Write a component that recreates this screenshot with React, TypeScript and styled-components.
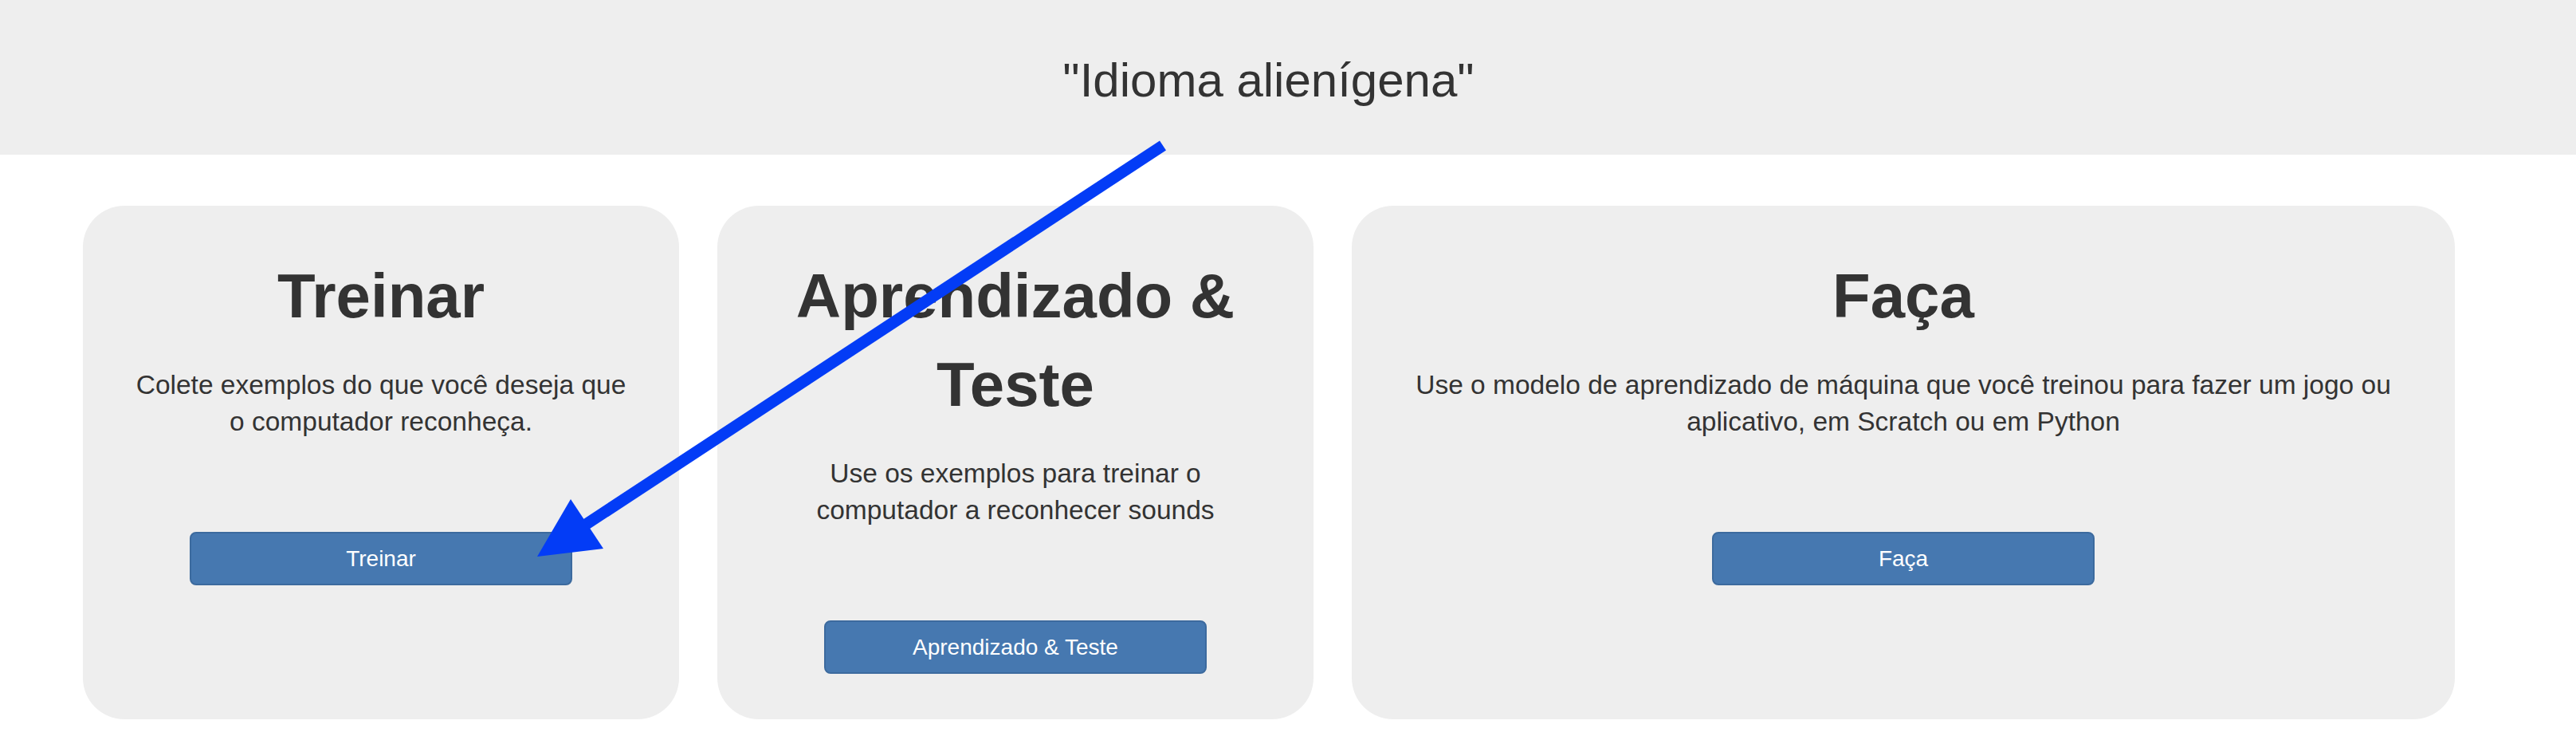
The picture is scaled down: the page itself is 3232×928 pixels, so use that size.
import React from 'react';
import styled, { createGlobalStyle } from 'styled-components';

const GlobalStyle = createGlobalStyle`
    html, body {
        margin: 0;
        padding: 0;
        background: #ffffff;
    }
    body {
        font-family: "Liberation Sans", Arial, sans-serif;
        color: #333333;
    }
`;

const Page = styled.div`
    position: relative;
    width: 3232px;
    height: 928px;
    overflow: hidden;
`;

const Header = styled.header`
    box-sizing: border-box;
    height: 194px;
    padding: 68px 49px 0 0;
    background-color: #eeeeee;
    text-align: center;
`;

const ProjectTitle = styled.h2`
    margin: 0;
    font-size: 60px;
    font-weight: 400;
    line-height: 66px;
    color: #333333;
`;

const CardRow = styled.div`
    display: grid;
    grid-template-columns: 748px 748px 1384px;
    column-gap: 48px;
    padding: 64px 0 0 104px;
`;

const Card = styled.section`
    box-sizing: border-box;
    display: flex;
    flex-direction: column;
    align-items: center;
    padding: 58px 60px 57px;
    background-color: #eeeeee;
    border-radius: 52px;
    text-align: center;
`;

const CardTitle = styled.h1`
    margin: 0 0 33px;
    font-size: 78px;
    font-weight: 700;
    line-height: 111px;
    color: #333333;
`;

const CardText = styled.p`
    margin: 0;
    font-size: 33.5px;
    line-height: 46px;
    color: #333333;
`;

const ActionButton = styled.button`
    box-sizing: border-box;
    margin-top: 115px;
    width: 480px;
    height: 67px;
    padding: 0;
    background-color: #4678b0;
    border: 2px solid #3c6a9e;
    border-radius: 8px;
    color: #ffffff;
    font-family: inherit;
    font-size: 28px;
    cursor: pointer;
`;

const ArrowLayer = styled.svg`
    position: absolute;
    top: 0;
    left: 0;
    pointer-events: none;
`;

const steps = [
    {
        title: 'Treinar',
        text: 'Colete exemplos do que você deseja que o computador reconheça.',
        button: 'Treinar',
    },
    {
        title: 'Aprendizado & Teste',
        text: 'Use os exemplos para treinar o computador a reconhecer sounds',
        button: 'Aprendizado & Teste',
    },
    {
        title: 'Faça',
        text: 'Use o modelo de aprendizado de máquina que você treinou para fazer um jogo ou aplicativo, em Scratch ou em Python',
        button: 'Faça',
    },
];

const App: React.FC = () => {
    return (
        <>
            <GlobalStyle />
            <Page>
                <Header>
                    <ProjectTitle>"Idioma alienígena"</ProjectTitle>
                </Header>
                <CardRow>
                    {steps.map((step) => (
                        <Card key={step.title}>
                            <CardTitle>{step.title}</CardTitle>
                            <CardText>{step.text}</CardText>
                            <ActionButton>{step.button}</ActionButton>
                        </Card>
                    ))}
                </CardRow>
                {/* callout arrow pointing at the first button */}
                <ArrowLayer width="3232" height="928" viewBox="0 0 3232 928">
                    <line x1="1459" y1="182.5" x2="730" y2="661" stroke="#033cf6" strokeWidth="14.5" />
                    <polygon points="674,698 716,626 757,688" fill="#033cf6" />
                </ArrowLayer>
            </Page>
        </>
    );
};

export default App;
